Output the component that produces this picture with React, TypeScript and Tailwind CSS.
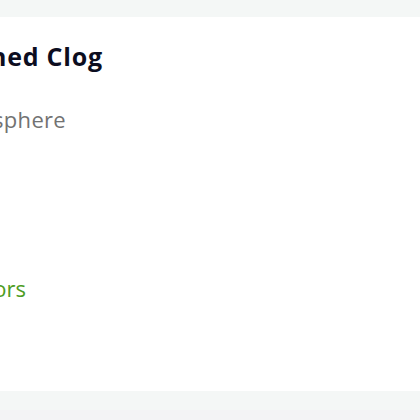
export default function App() {
  return (
    <div className="w-[420px] h-[420px] overflow-hidden bg-[#f4f7f6] flex flex-col" style={{ fontFamily: "'Open Sans', Lato, sans-serif" }}>
      <div className="h-[17px] shrink-0" />
      <div className="h-[374px] shrink-0 bg-white flex flex-col items-start w-[420px]">
        <div className="w-[103px] flex flex-col items-end">
          <div className="mt-[24px] whitespace-nowrap text-[25px] font-bold leading-[30px] tracking-[0.8px] text-[#0c0d1f]">Washed Clog</div>
        </div>
        <div className="w-[66px] flex flex-col items-end">
          <div className="mt-[34px] whitespace-nowrap text-[22px] leading-[28px] tracking-[0.3px] text-[#727272]">Atmosphere</div>
        </div>
        <div className="w-[26px] flex flex-col items-end">
          <div className="mt-[141px] whitespace-nowrap text-[22px] leading-[28px] text-[#4d9c23]">3 Colors</div>
        </div>
      </div>
      <div className="h-[19px] shrink-0" />
      <div className="flex-1 bg-[#f3f3f5]" />
    </div>
  );
}
